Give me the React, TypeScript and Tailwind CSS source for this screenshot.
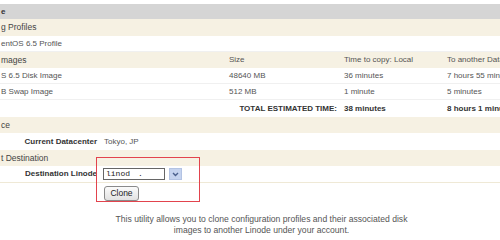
import React from "react";

const beige = "bg-[#f6f1e3]";

export default function App() {
  return (
    <div
      className="relative w-[500px] h-[240px] overflow-hidden bg-white text-[8px] text-[#555] whitespace-nowrap"
      style={{ fontFamily: '"Liberation Sans", Arial, sans-serif' }}
    >
      <div className="pt-[4px]">
        <div className="h-[15px] bg-[#d5d5d5] flex items-center pl-px font-bold text-[#333]">e</div>
        <div className={`h-[17px] ${beige} flex items-center pl-px text-[8.5px] text-[#444]`}>g Profiles</div>
        <div className="h-[16px] flex items-center pl-px border-b border-[#f0f0f0]">entOS 6.5 Profile</div>
        <div className={`h-[16px] ${beige} grid grid-cols-[229px_115px_103px_1fr] items-center`}>
          <div className="pl-px text-[8.5px] text-[#444]">mages</div>
          <div>Size</div>
          <div>Time to copy: Local</div>
          <div>To another Datacenter</div>
        </div>
        <div className="h-[16px] grid grid-cols-[229px_115px_103px_1fr] items-center border-b border-[#f0f0f0]">
          <div className="pl-px">S 6.5 Disk Image</div>
          <div>48640 MB</div>
          <div>36 minutes</div>
          <div>7 hours 55 minutes</div>
        </div>
        <div className="h-[16px] grid grid-cols-[229px_115px_103px_1fr] items-center border-b border-[#f0f0f0]">
          <div className="pl-px">B Swap Image</div>
          <div>512 MB</div>
          <div>1 minute</div>
          <div>5 minutes</div>
        </div>
        <div className="h-[17px] grid grid-cols-[229px_115px_103px_1fr] items-center font-bold text-[#333]">
          <div className="col-span-2 text-right pr-[7px]">TOTAL ESTIMATED TIME:</div>
          <div>38 minutes</div>
          <div>8 hours 1 minute</div>
        </div>
        <div className={`h-[16px] ${beige} flex items-center pl-px text-[8.5px] text-[#444]`}>ce</div>
        <div className="h-[17px] flex items-center">
          <div className="w-[97px] text-right font-bold text-[#333]">Current Datacenter</div>
          <div className="ml-[7px]">Tokyo, JP</div>
        </div>
        <div className={`h-[16px] ${beige} flex items-center pl-px text-[8.5px] text-[#444]`}>t Destination</div>
        <div className="h-[17px] flex items-center border-b border-[#efe9d6]">
          <div className="w-[97px] text-right font-bold text-[#333]">Destination Linode</div>
          <div className="ml-[6px] flex items-center gap-[4px]">
            <div
              className="w-[62px] h-[12px] border border-[#666] bg-white flex items-center pl-[2px] text-[8px] text-[#222]"
              style={{ fontFamily: '"Liberation Mono", "Courier New", monospace' }}
            >
              linod<span className="ml-[8px]">.</span>
            </div>
            <div className="w-[13px] h-[12px] bg-[#c5d3ef] border border-[#b3c3e3] flex items-center justify-center">
              <svg width="7" height="5" viewBox="0 0 7 5">
                <path d="M1 1 L3.5 3.5 L6 1" stroke="#4a5f8c" strokeWidth="1.4" fill="none" />
              </svg>
            </div>
          </div>
        </div>
        <div className="pt-[3px] pl-[104px]">
          <div className="w-[35px] h-[15px] rounded-[3px] border border-[#8a8a8a] bg-gradient-to-b from-[#fbfbfb] to-[#e2e2e2] flex items-center justify-center text-[8.5px] text-[#222]">
            Clone
          </div>
        </div>
        <div className="mt-[13px] pl-[23px] text-center text-[8.6px] leading-[10.5px] text-[#555]">
          This utility allows you to clone configuration profiles and their associated disk
          <br />
          images to another Linode under your account.
        </div>
      </div>
      <div className="absolute left-[96px] top-[157px] w-[104px] h-[45px] border-[1.5px] border-[#e2434d]" />
    </div>
  );
}
